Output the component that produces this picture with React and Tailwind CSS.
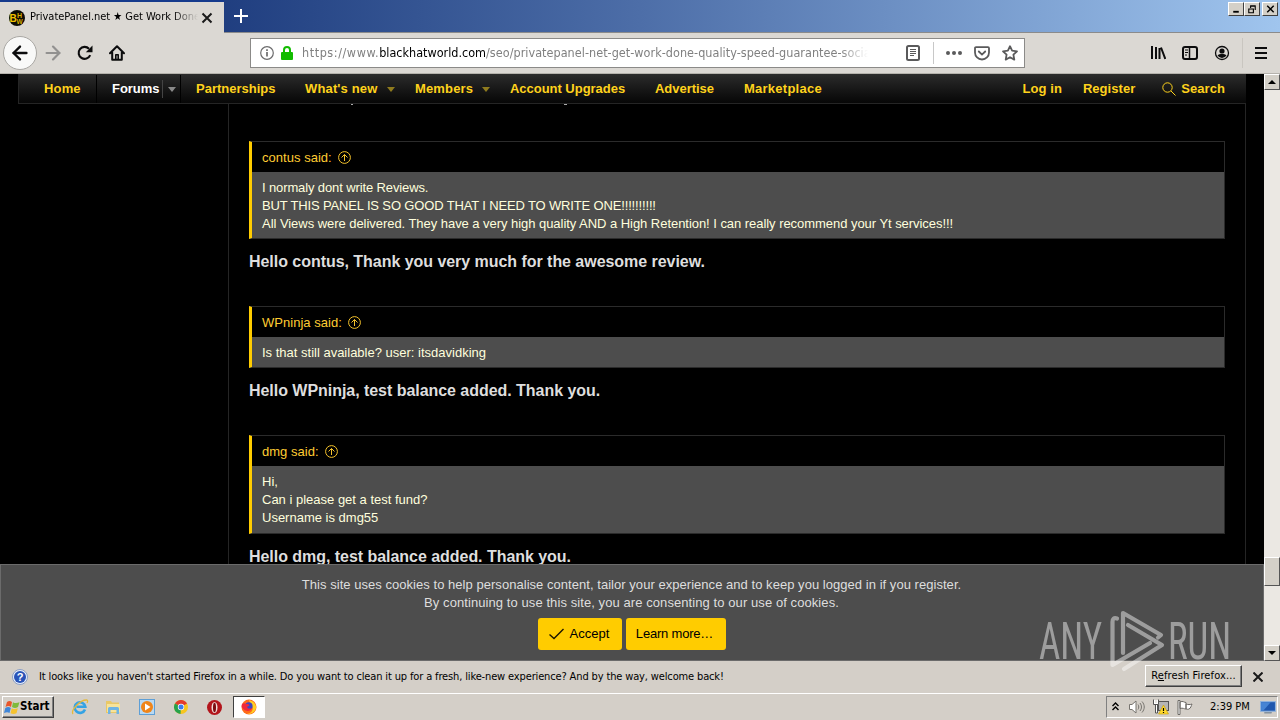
import {
  ArrowLeft,
  ArrowRight,
} from "lucide-react";

const tahoma = "font-['DejaVu_Sans_Condensed','DejaVu_Sans',sans-serif] [font-stretch:condensed]";

const navItems = [
  { label: "Partnerships", width: "w-[109px]", tracking: "tracking-[0px]" },
  { label: "What's new", width: "w-[110px]", tracking: "tracking-[0.15px]", menu: true },
  { label: "Members", width: "w-[95px]", tracking: "tracking-[0.15px]", menu: true },
  { label: "Account Upgrades", width: "w-[145px]", tracking: "tracking-[-0.03px]" },
  { label: "Advertise", width: "w-[89px]", tracking: "tracking-[-0.03px]" },
  { label: "Marketplace", width: "w-[110px]", tracking: "tracking-[0.25px]" },
];

const posts = [
  {
    user: "contus",
    lines: [
      { text: "I normaly dont write Reviews.", tracking: "tracking-[-0.12px]" },
      { text: "BUT THIS PANEL IS SO GOOD THAT I NEED TO WRITE ONE!!!!!!!!!!", tracking: "tracking-[-0.15px]" },
      {
        text: "All Views were delivered. They have a very high quality AND a High Retention! I can really recommend your Yt services!!!",
        tracking: "tracking-[-0.045px]",
      },
    ],
    reply: "Hello contus, Thank you very much for the awesome review.",
    height: "h-[98px]",
    gap: "mb-[32px]",
  },
  {
    user: "WPninja",
    lines: [{ text: "Is that still available? user: itsdavidking", tracking: "tracking-[0px]" }],
    reply: "Hello WPninja, test balance added. Thank you.",
    height: "h-[62px]",
    gap: "mb-[32px]",
  },
  {
    user: "dmg",
    lines: [
      { text: "Hi,", tracking: "tracking-[0px]" },
      { text: "Can i please get a test fund?", tracking: "tracking-[0px]" },
      { text: "Username is dmg55", tracking: "tracking-[0px]" },
    ],
    reply: "Hello dmg, test balance added. Thank you.",
    height: "h-[99px]",
    gap: "mb-0",
  },
];

function TitleBar() {
  return (
    <div className="flex h-[33px] shrink-0 bg-linear-to-r from-[#0a246a] via-[#4d6ea8] via-50% to-[#a0c5ee]">
      <div className="flex h-full w-[224px] shrink-0 flex-col">
        <div className="h-[2px] bg-[#153a8c]" />
        <div className="flex flex-1 items-center bg-[#dbd8d3] pl-[9px]">
          <svg width="16" height="16" viewBox="0 0 16 16" className="shrink-0">
            <circle cx="8" cy="8" r="8" fill="#0c0c04" />
            <text x="0.5" y="12" fontSize="10" fontWeight="bold" fill="#f0c000" fontFamily="Liberation Sans, sans-serif">B</text>
            <text x="8" y="7.6" fontSize="7" fontWeight="bold" fill="#d8aa00" fontFamily="Liberation Sans, sans-serif">H</text>
            <text x="7.5" y="14" fontSize="6.5" fontWeight="bold" fill="#d8aa00" fontFamily="Liberation Sans, sans-serif">W</text>
          </svg>
          <div className="ml-[5px] w-[168px] overflow-hidden whitespace-nowrap text-[11px] tracking-[-0.02px] text-black mask-r-from-85%">
            PrivatePanel.net ★ Get Work Done
          </div>
          <svg width="12" height="12" viewBox="0 0 12 12" className="ml-[3px] shrink-0" stroke="#1a1a1a" strokeWidth="2">
            <path d="M1.5 1.5l9 9M10.5 1.5l-9 9" />
          </svg>
        </div>
      </div>
      <div className="flex flex-1 justify-between border-b border-[#8b8b8b] pl-[10px]">
        <svg width="14" height="14" viewBox="0 0 14 14" className="mt-[9px]" stroke="#fff" strokeWidth="2">
          <path d="M7 0v14M0 7h14" />
        </svg>
        <div className="mt-[2px] mr-[2px] flex h-[14px]">
          <WinButton>
            <path d="M4 9.5h6" strokeWidth="2" />
          </WinButton>
          <WinButton>
            <path d="M5.5 3.5h5v4M5.5 3v2.5M5 3h6M3.5 6.5h5v4h-5zM3 6.5h6" strokeWidth="1.2" fill="none" />
          </WinButton>
          <div className="w-[2px]" />
          <WinButton>
            <path d="M4 3l7 7M11 3l-7 7" strokeWidth="1.6" />
          </WinButton>
        </div>
      </div>
    </div>
  );
}

function WinButton({ children }) {
  return (
    <div className="h-[14px] w-[16px] border border-t-white border-r-[#404040] border-b-[#404040] border-l-white bg-[#d4d0c8]">
      <svg width="14" height="12" viewBox="0 0 14 13" stroke="#000">
        {children}
      </svg>
    </div>
  );
}

function Toolbar() {
  return (
    <div className="flex h-[41px] shrink-0 items-center border-b border-[#b5b2ac] bg-[#dbd8d3]">
      <div className="ml-[3px] flex size-[34px] items-center justify-center rounded-full border border-[#a9a7a3] bg-[#f9f9f8]">
        <ArrowLeft size={22} strokeWidth={2.6} color="#0c0c0d" />
      </div>
      <ArrowRight size={22} strokeWidth={2.4} color="#929190" className="ml-[5px]" />
      <svg width="16" height="16" viewBox="0 0 16 16" className="ml-[13px]" fill="none" stroke="#0c0c0d" strokeWidth="2.1">
        <path d="M13.2 10.2A6 6 0 1 1 12 3.7" />
        <path d="M15.5 0.5v6.7h-6.7z" fill="#0c0c0d" stroke="none" />
      </svg>
      <svg width="16" height="16" viewBox="0 0 16 16" className="ml-[16px]" fill="none" stroke="#0c0c0d" strokeWidth="2" strokeLinejoin="round" strokeLinecap="round">
        <path d="M1 8.2L8 1.2l7 7M3.2 7.5v7.3h9.6V7.5" />
        <path d="M6.8 14V9.8h2.4V14" strokeWidth="1.6" />
      </svg>
      <div className="ml-[125px] flex h-[30px] w-[775px] items-center border border-[#8b8a88] bg-white pl-[9px]">
        <svg width="14" height="14" viewBox="0 0 14 14" className="shrink-0" fill="none" stroke="#6c6c6d" strokeWidth="1.2">
          <circle cx="7" cy="7" r="6.3" />
          <path d="M7 6v4.5M7 3.2v1.7" strokeWidth="1.7" />
        </svg>
        <svg width="12" height="14" viewBox="0 0 12 14" className="ml-[7px] shrink-0">
          <path d="M3 7V4a3 3 0 0 1 6 0v3" fill="none" stroke="#12bc00" strokeWidth="2" />
          <rect x="0" y="6" width="12" height="8" rx="1" fill="#12bc00" />
        </svg>
        <div className="ml-[9px] w-[566px] overflow-hidden whitespace-nowrap text-[12.5px] text-[#808080] mask-r-from-95%">
          <span className="tracking-[0.57px]">https://www.</span>
          <span className="text-black">blackhatworld.com</span>
          <span className="tracking-[0.04px]">/seo/privatepanel-net-get-work-done-quality-speed-guarantee-social</span>
        </div>
        <svg width="14" height="16" viewBox="0 0 14 16" className="ml-[38px] shrink-0" fill="none" stroke="#5a5a5b">
          <rect x="1" y="1" width="12" height="14" rx="1.5" strokeWidth="2" />
          <path d="M4 4.5h6M4 6.5h6M4 8.5h6M4 10.5h4" />
        </svg>
        <div className="ml-[13px] h-[22px] w-px bg-[#c8c8c8]" />
        <svg width="16" height="4" viewBox="0 0 16 4" className="ml-[12px] shrink-0" fill="#5a5a5b">
          <circle cx="2" cy="2" r="2" />
          <circle cx="8" cy="2" r="2" />
          <circle cx="14" cy="2" r="2" />
        </svg>
        <svg width="16" height="15" viewBox="0 0 16 15" className="ml-[12px] shrink-0" fill="none" stroke="#5a5a5b" strokeWidth="1.8" strokeLinecap="round">
          <path d="M2 1.2h12a1 1 0 0 1 1 1V6.5a7 7 0 0 1-14 0V2.2a1 1 0 0 1 1-1z" />
          <path d="M4.8 5.5L8 8.6l3.2-3.1" />
        </svg>
        <svg width="16" height="16" viewBox="0 0 16 16" className="ml-[12px] shrink-0" fill="none" stroke="#5a5a5b" strokeWidth="1.8" strokeLinejoin="round">
          <path d="M8 1.2l2.1 4.5 4.9.6-3.600 3.400.9 4.900L8 12.200l-4.300 2.400.9-4.900L1 6.300l4.900-.6z" />
        </svg>
      </div>
      <svg width="16" height="16" viewBox="0 0 16 16" className="ml-[125px]" fill="none" stroke="#0c0c0d" strokeWidth="2">
        <path d="M2 1v13M6 2v12M9.5 3v11M11 2.5l4.300 11.500" />
      </svg>
      <svg width="16" height="14" viewBox="0 0 16 14" className="ml-[16px]" fill="none" stroke="#0c0c0d" strokeWidth="2">
        <rect x="1" y="1" width="14" height="12" rx="2" />
        <path d="M7.5 1v12" strokeWidth="1.5" />
        <path d="M3 4h3M3 6.500h3M3 9h2" strokeWidth="1" />
      </svg>
      <svg width="16" height="16" viewBox="0 0 16 16" className="ml-[16px]">
        <circle cx="8" cy="8" r="6.5" fill="none" stroke="#0c0c0d" strokeWidth="1.3" />
        <circle cx="8" cy="6" r="2.6" fill="#0c0c0d" />
        <path d="M3.5 10.200c2-1.600 7-1.600 9 0A5 5 0 0 1 8 13a5 5 0 0 1-4.500-2.800z" fill="#0c0c0d" />
      </svg>
      <div className="ml-[12px] h-[30px] w-px bg-[#c9c6c0]" />
      <svg width="12" height="12" viewBox="0 0 12 12" className="ml-[12px]" stroke="#0c0c0d" strokeWidth="2">
        <path d="M0 1h12M0 6h12M0 11h12" />
      </svg>
    </div>
  );
}

function Caret({ className }) {
  return (
    <svg width="8" height="5" viewBox="0 0 8 5" className={className} fill="currentColor">
      <path d="M0 0h8L4 5z" />
    </svg>
  );
}

function SiteNav() {
  return (
    <div className="mr-[18px] ml-[18px] flex h-[30px] shrink-0 items-stretch border-b border-l border-[#252525] bg-linear-to-b from-[#2c2c2c] to-[#070707] pt-px text-[13px] font-bold text-[#ffd21c]">
      <div className="flex w-[77px] items-center pl-[25px] tracking-[0.15px]">Home</div>
      <div className="flex w-[85px] items-center border-r border-l border-black pl-[15px] text-white">
        <span className="tracking-[-0.03px]">Forums</span>
        <div className="ml-auto flex h-[18px] w-[18px] items-center border-l border-[#444] pl-[5px]">
          <Caret className="text-[#8a8a8a]" />
        </div>
      </div>
      <div className="flex items-center pl-[15px]">
        {navItems.map((item) => (
          <div key={item.label} className={`flex items-center ${item.width}`}>
            <span className={item.tracking}>{item.label}</span>
            {item.menu && <Caret className="ml-[9px] text-[#8f7b1e]" />}
          </div>
        ))}
      </div>
      <div className="mr-[21px] ml-auto flex items-center tracking-[0.05px]">
        <span>Log in</span>
        <span className="ml-[21px]">Register</span>
        <svg width="14" height="14" viewBox="0 0 14 14" className="mr-[5px] ml-[27px]" fill="none" stroke="#ffd21c">
          <circle cx="5.5" cy="5.5" r="4.7" />
          <path d="M9 9l4.5 4.5" />
        </svg>
        <span>Search</span>
      </div>
    </div>
  );
}

function Quote({ post }) {
  return (
    <div className={post.gap}>
      <div className={`flex flex-col border border-l-3 border-[#2b2b2b] border-l-[#ffcc00] ${post.height}`}>
        <div className="flex h-[30px] shrink-0 items-center pt-px pl-[10px] text-[13px] text-[#ffcc33]">
          <span className="tracking-[0.03px]">{post.user} said:</span>
          <svg width="13" height="13" viewBox="0 0 13 13" className="mb-px ml-[6px]" fill="none" stroke="#f5c32c">
            <circle cx="6.5" cy="6.5" r="5.9" />
            <path d="M6.5 10V3.500M3.500 6.500l3-3 3 3" />
          </svg>
        </div>
        <div className="flex-1 bg-[#4d4d4d] pt-[6.6px] pl-[10px] text-[13px] leading-[18.2px] text-[#ffffdd]">
          {post.lines.map((line) => (
            <p key={line.text} className={`whitespace-nowrap ${line.tracking}`}>
              {line.text}
            </p>
          ))}
        </div>
      </div>
      <p className="mt-[11px] h-[24px] text-[16px] leading-[24px] font-bold tracking-[-0.04px] whitespace-nowrap text-[#dedede]">
        {post.reply}
      </p>
    </div>
  );
}

function CookieNotice() {
  return (
    <div className="absolute bottom-0 left-0 flex h-[97px] w-full flex-col items-center border border-[#6b6b6b] bg-[#4d4d4d] pt-[11px] pr-px text-[13px] leading-[18px] text-[#dedede]">
      <p className="tracking-[0.04px]">This site uses cookies to help personalise content, tailor your experience and to keep you logged in if you register.</p>
      <p className="tracking-[0.08px]">By continuing to use this site, you are consenting to our use of cookies.</p>
      <div className="mt-[6px] flex gap-[4px] text-black">
        <button className="flex h-[32px] w-[84px] items-center rounded-[3px] bg-[#ffcc00] pl-[11px]">
          <svg width="15" height="12" viewBox="0 0 15 12" className="mr-[6px]" fill="none" stroke="#1c1600" strokeWidth="1.4">
            <path d="M0.5 6.500l4.500 4L14.500 1" />
          </svg>
          Accept
        </button>
        <button className="h-[32px] w-[100px] rounded-[3px] bg-[#ffcc00] pr-[2px] tracking-[-0.2px]">Learn more…</button>
      </div>
    </div>
  );
}

function Scrollbar() {
  return (
    <div className="flex w-[16px] shrink-0 flex-col bg-[#ebe8e3]">
      <div className="flex h-[16px] items-center justify-center border border-t-white border-r-[#555] border-b-[#555] border-l-white bg-[#d4d0c8]">
        <svg width="8" height="4" viewBox="0 0 8 4"><path d="M0 4L4 0l4 4z" /></svg>
      </div>
      <div className="h-[467px]" />
      <div className="h-[29px] border border-t-white border-r-[#555] border-b-[#555] border-l-white bg-[#d4d0c8]" />
      <div className="mt-auto flex h-[16px] items-center justify-center border border-t-white border-r-[#555] border-b-[#555] border-l-white bg-[#d4d0c8]">
        <svg width="8" height="4" viewBox="0 0 8 4"><path d="M0 0l4 4 4-4z" /></svg>
      </div>
    </div>
  );
}

function RefreshBar() {
  return (
    <div className="flex h-[32px] shrink-0 items-center bg-[#d4cfc8] text-[11px] text-black">
      <svg width="16" height="16" viewBox="0 0 16 16" className="ml-[12px]">
        <circle cx="8" cy="8" r="7.5" fill="#e8eefa" stroke="#8b9fc4" />
        <circle cx="8" cy="8" r="6" fill="#2853b8" />
        <text x="8" y="12" textAnchor="middle" fontSize="11" fontWeight="bold" fill="#fff" fontFamily="Liberation Sans, sans-serif">?</text>
      </svg>
      <span className="ml-[11px] whitespace-nowrap tracking-[-0.14px]">
        It looks like you haven't started Firefox in a while. Do you want to clean it up for a fresh, like-new experience? And by the way, welcome back!
      </span>
      <button className="mr-[11px] mb-[2px] ml-auto h-[22px] w-[97px] border border-t-white border-r-[#404040] border-b-[#404040] border-l-white bg-[#d4d0c8] tracking-[0.1px] shadow-[inset_-1px_-1px_0_#808080]">
        R<span className="underline">e</span>fresh Firefox...
      </button>
      <svg width="10" height="10" viewBox="0 0 10 10" className="mr-[17px]" stroke="#1a1a1a" strokeWidth="2">
        <path d="M0.5 0.500l9 9M9.500 0.500l-9 9" />
      </svg>
    </div>
  );
}

function Taskbar() {
  return (
    <div className="flex h-[27px] shrink-0 items-center border-t border-white bg-[#d4cfc8] text-[11px] text-black">
      <div className="ml-[2px] flex h-[22px] w-[52px] items-center border border-t-white border-r-[#404040] border-b-[#404040] border-l-white pl-[1px] shadow-[inset_-1px_-1px_0_#808080]">
        <svg width="16" height="15" viewBox="0 0 16 15" className="shrink-0">
          <path d="M3 2c2-1.500 3.500-1 5 0L7 7C5.500 6 4 5.600 1.500 7z" fill="#e8562a" />
          <path d="M9 2.200c2 1.200 4 1 6.500 0L14 7c-2 1.200-4 1.200-6 0z" fill="#7fba3c" />
          <path d="M1.300 8c2-1.300 4-1.200 5.500 0l-1.300 5c-1.500-1.100-3-1.200-5.500 0z" fill="#3f86d8" />
          <path d="M7.800 8.200c2 1.200 4 1 6 0l-1.300 5c-2 1.100-4 1.100-6 0z" fill="#f5c22e" />
        </svg>
        <span className="text-[11.5px] font-bold">Start</span>
      </div>
      <svg width="18" height="18" viewBox="0 0 18 18" className="ml-[17px]" fill="none">
        <path d="M14 11.500A5.300 5.300 0 1 1 14.300 8.800H5.500" stroke="#35a3e4" strokeWidth="2.6" />
        <path d="M2 16C-.5 12.500 9 1.500 16 2c1 .5.600 2 0 3" stroke="#e6b93a" strokeWidth="1.3" />
      </svg>
      <svg width="16" height="16" viewBox="0 0 16 16" className="ml-[16px]">
        <path d="M1 2h5l1 1.500h7V14H1z" fill="#e9c867" />
        <path d="M2 5h13v8H2z" fill="#f7e39a" />
        <path d="M3 15V9.500a1.500 1.500 0 0 1 1.500-1.500h8A1.500 1.500 0 0 1 14 9.500V15h-2.500v-4h-6v4z" fill="#6eb4e4" />
      </svg>
      <svg width="16" height="16" viewBox="0 0 16 16" className="ml-[18px]">
        <rect x=".5" y=".5" width="15" height="15" fill="#b9d9f2" stroke="#5e9fd6" />
        <circle cx="8" cy="8" r="6" fill="#f08519" />
        <path d="M6 4.500v7L11.500 8z" fill="#fff" />
      </svg>
      <svg width="14" height="14" viewBox="0 0 14 14" className="ml-[19px]">
        <circle cx="7" cy="7" r="7" fill="#f7c61f" />
        <path d="M7 7L1 3.400A7 7 0 0 1 13 3.400z" fill="#e33b2e" />
        <path d="M7 7L1 3.400A7 7 0 0 0 6.500 14z" fill="#27a24c" />
        <circle cx="7" cy="7" r="3.2" fill="#fff" />
        <circle cx="7" cy="7" r="2.5" fill="#3b7ded" />
      </svg>
      <svg width="15" height="15" viewBox="0 0 15 15" className="ml-[19px]">
        <circle cx="7.5" cy="7.5" r="7.5" fill="#b3151b" />
        <ellipse cx="7.5" cy="7.5" rx="3" ry="5.6" fill="#f0dcda" />
        <ellipse cx="7.5" cy="7.5" rx="1.5" ry="4.8" fill="#7c0d10" />
      </svg>
      <div className="ml-[11px] flex h-[22px] w-[32px] items-center justify-center border border-t-[#404040] border-r-white border-b-white border-l-[#404040] bg-white">
        <svg width="16" height="16" viewBox="0 0 16 16">
          <circle cx="8" cy="8" r="7.5" fill="#ff6a1a" />
          <path d="M8 1c4 1 7.500 4 7 8-1 5-6 6.500-9 6 5-1 7-5 5-8-.5-2-2.500-3-3-6z" fill="#ffcf24" />
          <circle cx="7.800" cy="7" r="3.8" fill="#3f46c0" />
          <path d="M1 5c1-1 3-1 4 0 2 0 4 .5 3 2-2 0-2 1-1.500 2 1.500 1 3 .5 4.500 0-1 3-5 4-8 1.500S.500 7 1 5z" fill="#f0283c" />
        </svg>
      </div>
      <div className="mr-[2px] ml-auto flex h-[22px] w-[172px] items-center border border-t-[#808080] border-r-white border-b-white border-l-[#808080]">
        <svg width="7" height="9" viewBox="0 0 7 9" className="mb-[2px] ml-[5px]" fill="none" stroke="#000" strokeWidth="1.4">
          <path d="M.5 4L3.500 1l3 3M.5 8L3.500 5l3 3" />
        </svg>
        <svg width="16" height="14" viewBox="0 0 16 14" className="ml-[10px]" fill="#fff" stroke="#77746f">
          <path d="M.5 4.500H3L7 1v12L3 9.500H.500z" />
          <path d="M9 4.500c1 1.500 1 3.500 0 5M11 3c2 2.500 2 5.500 0 8M13 1.500c3 3.500 3 7.500 0 11" fill="none" />
        </svg>
        <svg width="16" height="16" viewBox="0 0 16 16" className="ml-[8px]">
          <rect x="5.5" y="2.5" width="10" height="9" fill="#b5b5b5" stroke="#555" />
          <path d="M1.500 1v4h3V1M3.200 5v9" fill="none" stroke="#fff" strokeWidth="2" />
          <path d="M.5 .5v5h5v-5M2.500 5.500V14h2V5.500" fill="none" stroke="#555" />
          <path d="M10.500 6L15.500 15h-10z" fill="#ffd92e" stroke="#c49a00" strokeWidth=".6" />
          <path d="M10.500 9v3M10.500 13v1" stroke="#000" strokeWidth="1.2" />
        </svg>
        <svg width="16" height="15" viewBox="0 0 16 15" className="ml-[8px]" fill="#fff" stroke="#6b6864">
          <path d="M1 .5h2v14H1zM3 2c3-1.500 4 .5 6 .5V9C7 9 6 7.500 3 8.500zM9 4c2 .8 4 .8 6 0-1 2-1 4-3 5-1 .5-2 .3-3 0z" />
        </svg>
        <span className="ml-[17px] whitespace-nowrap">2:39 PM</span>
        <svg width="16" height="13" viewBox="0 0 15 12" className="mr-px ml-auto">
          <rect x=".5" y=".5" width="14" height="9" fill="#1f57ae" stroke="#8fb3de" />
          <path d="M1 1h9L3 9H1z" fill="#4684d4" />
          <path d="M4 11h7" stroke="#64788f" />
        </svg>
      </div>
    </div>
  );
}

// Translucent logo that sits over the cookie notice and the refresh bar
function Watermark() {
  return (
    <div className="pointer-events-none absolute top-[610px] left-[1038px] h-[64px] w-[194px] text-white opacity-45">
      <span className="absolute top-[12px] left-[1px] origin-left scale-x-[0.71] font-['Roboto',sans-serif] text-[52px] leading-[39px]">ANY</span>
      <svg width="58" height="64" viewBox="0 0 58 64" className="absolute top-0 left-[71px]" fill="none" stroke="#fff" strokeWidth="4.2" strokeLinejoin="round" strokeLinecap="round">
        <path d="M8 8.500Q3.500 7 3.500 12V55L41 33M14 43V3L52 25L49 27.500M19 15L53 35L15 59" />
      </svg>
      <span className="absolute top-[12px] left-[130px] origin-left scale-x-[0.71] font-['Roboto',sans-serif] text-[52px] leading-[39px]">RUN</span>
    </div>
  );
}

export default function App() {
  return (
    <div className={`relative flex h-[720px] w-[1280px] flex-col overflow-hidden bg-black ${tahoma}`}>
      <TitleBar />
      <Toolbar />
      <div className="flex h-[587px] shrink-0">
        <div className="relative flex min-w-0 flex-1 flex-col overflow-hidden bg-black font-['Liberation_Sans',sans-serif]">
          <SiteNav />
          <div className="mr-[18px] ml-[228px] flex-1 border-r border-l border-[#252525] pr-[20px] pl-[20px]">
            <div className="flex h-[37px] items-start">
              <div className="ml-[102px] h-px w-[2px] bg-[#aaa]" />
              <div className="ml-[211px] h-px w-[3px] bg-[#aaa]" />
            </div>
            {posts.map((post) => (
              <Quote key={post.user} post={post} />
            ))}
          </div>
          <CookieNotice />
        </div>
        <Scrollbar />
      </div>
      <RefreshBar />
      <Taskbar />
      <Watermark />
    </div>
  );
}
